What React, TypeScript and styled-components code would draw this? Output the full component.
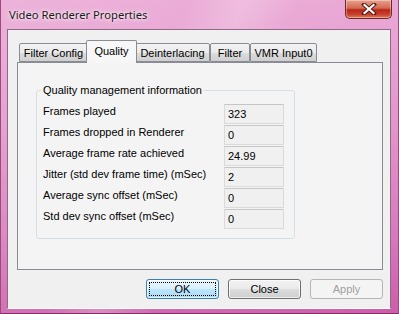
import React from "react";
import styled, { createGlobalStyle } from "styled-components";

const Global = createGlobalStyle`
  html, body { margin: 0; padding: 0; background: #fff; }
  body { width: 399px; height: 314px; overflow: hidden; }
  * { box-sizing: border-box; }
`;

const Frame = styled.div`
  width: 399px;
  height: 314px;
  display: flex;
  flex-direction: column;
  padding: 0 7px 4px 6px;
  background:
    linear-gradient(115deg, rgba(255,255,255,0) 35%, rgba(255,255,255,0.22) 45%, rgba(255,255,255,0) 55%),
    linear-gradient(90deg, rgba(255,255,255,0.12) 0%, rgba(255,255,255,0) 100%),
    linear-gradient(180deg, #eaa8d5 0%, #e296cb 40%, #d77abc 75%, #cc5ea9 100%);
  border-left: 1px solid #9b4a80;
  border-right: 1px solid #9b4a80;
  border-bottom: 1px solid #7d2f66;
  font-family: "Liberation Sans", Arial, sans-serif;
  font-size: 11px;
  color: #000;
`;

const TitleBar = styled.div`
  height: 29px;
  flex: none;
  display: flex;
  align-items: flex-start;
  justify-content: space-between;
`;

const Title = styled.div`
  font-family: "Noto Sans", "Liberation Sans", sans-serif;
  font-size: 11.2px;
  line-height: 12px;
  padding-top: 9px;
  padding-left: 2px;
  color: #1a1a1a;
  text-shadow: 0 0 6px rgba(255,255,255,0.9), 0 0 3px rgba(255,255,255,0.9);
`;

const CloseBtn = styled.div`
  width: 47px;
  height: 19px;
  margin-right: -1px;
  border: 1px solid #6b2a2a;
  border-top: none;
  border-radius: 0 0 5px 5px;
  background: linear-gradient(180deg, #e8a28f 0%, #d4694f 45%, #b8261a 55%, #c7412b 80%, #e07b57 100%);
  box-shadow: inset 0 0 0 1px rgba(255,255,255,0.35);
  display: flex;
  align-items: center;
  justify-content: center;
`;

const Client = styled.div`
  flex: 1;
  background: #f0f0f0;
  border: 1px solid #8f6a86;
  border-bottom-color: #ffffff;
  display: flex;
  flex-direction: column;
  padding: 10px 8px 0 9px;
`;

const TabStrip = styled.div`
  display: flex;
  align-items: flex-end;
  height: 22px;
  padding-left: 2px;
  position: relative;
  z-index: 1;
`;

const Tab = styled.div<{ $active?: boolean; $w: number }>`
  width: ${(p) => p.$w}px;
  height: ${(p) => (p.$active ? 23 : 19)}px;
  margin-bottom: ${(p) => (p.$active ? -1 : 0)}px;
  margin-left: ${(p) => (p.$active ? -2 : 0)}px;
  margin-right: ${(p) => (p.$active ? -2 : 0)}px;
  padding-top: ${(p) => (p.$active ? 3 : 2)}px;
  text-align: center;
  border: 1px solid #898c95;
  border-bottom: ${(p) => (p.$active ? "none" : "1px solid #898c95")};
  border-radius: 2px 2px 0 0;
  background: ${(p) =>
    p.$active
      ? "#f7f7f7"
      : "linear-gradient(180deg, #f2f2f2 0%, #ebebeb 50%, #dddddd 51%, #cfcfcf 100%)"};
  position: relative;
  z-index: ${(p) => (p.$active ? 2 : 1)};
  white-space: nowrap;
  line-height: 14px;
`;

const Panel = styled.div`
  width: 366px;
  height: 208px;
  border: 1px solid #898c95;
  background: #f4f4f4;
  padding: 21px 0 0 18px;
`;

const Group = styled.fieldset`
  margin: 0;
  width: 259px;
  height: 155px;
  border: 1px solid #d5dfe5;
  border-radius: 3px;
  padding: 7px 0 0 6px;
  display: grid;
  grid-template-columns: 181px 60px;
  grid-auto-rows: 21px;
  align-content: start;
`;

const Legend = styled.legend`
  padding: 0 2px;
  margin-left: -2px;
  font-size: 11px;
  line-height: 13px;
`;

const Label = styled.div`
  padding-top: 1px;
  line-height: 13px;
  white-space: nowrap;
`;

const ValueBox = styled.div`
  height: 20px;
  border: 1px solid #dadada;
  border-top-color: #c6c6c6;
  background: #f0f0f0;
  display: flex;
  align-items: center;
  padding-left: 3px;
`;

const ButtonRow = styled.div`
  display: flex;
  justify-content: flex-end;
  gap: 9px;
  padding-top: 9px;
  width: 366px;
`;

const Button = styled.div<{ $kind?: "default" | "normal" | "disabled" }>`
  width: 73px;
  height: 20px;
  border-radius: 3px;
  display: flex;
  align-items: center;
  justify-content: center;
  font-size: 11px;
  color: ${(p) => (p.$kind === "disabled" ? "#a0a0a0" : "#000")};
  border: 1px solid
    ${(p) => (p.$kind === "default" ? "#3c7fb1" : p.$kind === "disabled" ? "#b5b5b5" : "#707070")};
  background: ${(p) =>
    p.$kind === "disabled"
      ? "#f4f4f4"
      : p.$kind === "default"
      ? "linear-gradient(180deg, #eaf6fd 0%, #d9f0fc 50%, #bee6fd 51%, #a7d9f5 100%)"
      : "linear-gradient(180deg, #f2f2f2 0%, #ebebeb 50%, #dddddd 51%, #cfcfcf 100%)"};
  box-shadow: ${(p) => (p.$kind === "disabled" ? "none" : "inset 0 0 0 1px rgba(255,255,255,0.7)")};
  position: relative;
`;

const FocusRect = styled.span`
  position: absolute;
  inset: 2px;
  border: 1px dotted #000;
  border-radius: 1px;
`;

const rows: [string, string][] = [
  ["Frames played", "323"],
  ["Frames dropped in Renderer", "0"],
  ["Average frame rate achieved", "24.99"],
  ["Jitter (std dev frame time) (mSec)", "2"],
  ["Average sync offset (mSec)", "0"],
  ["Std dev sync offset (mSec)", "0"],
];

const tabs: { label: string; w: number; active?: boolean }[] = [
  { label: "Filter Config", w: 69 },
  { label: "Quality", w: 51, active: true },
  { label: "Deinterlacing", w: 75 },
  { label: "Filter", w: 40 },
  { label: "VMR Input0", w: 67 },
];

export default function App() {
  return (
    <>
      <Global />
      <Frame>
        <TitleBar>
          <Title>Video Renderer Properties</Title>
          <CloseBtn>
            <svg width="16" height="12" viewBox="0 0 16 12">
              <path
                d="M3 1.5 L13 10.5 M13 1.5 L3 10.5"
                stroke="#5a1a14"
                strokeWidth="4"
                strokeLinecap="square"
              />
              <path
                d="M3.5 2 L12.5 10 M12.5 2 L3.5 10"
                stroke="#ffffff"
                strokeWidth="2.2"
                strokeLinecap="square"
              />
            </svg>
          </CloseBtn>
        </TitleBar>
        <Client>
          <TabStrip>
            {tabs.map((t) => (
              <Tab key={t.label} $w={t.w} $active={t.active}>
                {t.label}
              </Tab>
            ))}
          </TabStrip>
          <Panel>
            <Group>
              <Legend>Quality management information</Legend>
              {rows.map(([l, v]) => (
                <React.Fragment key={l}>
                  <Label>{l}</Label>
                  <ValueBox>{v}</ValueBox>
                </React.Fragment>
              ))}
            </Group>
          </Panel>
          <ButtonRow>
            <Button $kind="default">
              <FocusRect />
              OK
            </Button>
            <Button $kind="normal">Close</Button>
            <Button $kind="disabled">Apply</Button>
          </ButtonRow>
        </Client>
      </Frame>
    </>
  );
}
